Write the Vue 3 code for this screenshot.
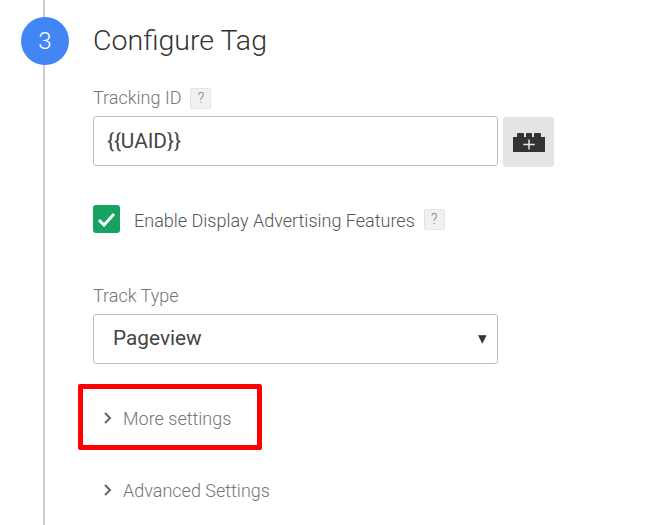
<template>
  <div class="page">
    <div class="rail"></div>
    <div class="badge">3</div>
    <main class="content">
      <h1 class="title">Configure Tag</h1>

      <div class="label-row tracking">
        <span class="label">Tracking ID</span>
        <span class="help">?</span>
      </div>
      <div class="input-row">
        <div class="field">{{ trackingId }}</div>
        <button class="var-btn" aria-label="Insert variable">
          <svg width="32" height="19" viewBox="0 0 32 19">
            <path d="M0 4h4V1q0-1 1-1h5q1 0 1 1v3h2V1q0-1 1-1h4q1 0 1 1v3h2V1q0-1 1-1h5q1 0 1 1v3h4v15H0z" fill="#333" />
            <path d="M15.25 6.5h1.5v4.25h5v1.5h-5v4.25h-1.5v-4.25h-5v-1.5h5z" fill="#e4e4e4" />
          </svg>
        </button>
      </div>

      <label class="check-row">
        <span class="check">
          <svg width="19" height="15" viewBox="0 0 19 15">
            <path d="M2 8l5 5L17 2" fill="none" stroke="#fff" stroke-width="3" />
          </svg>
        </span>
        <span class="check-text">Enable Display Advertising Features</span>
        <span class="help">?</span>
      </label>

      <div class="label track">Track Type</div>
      <div class="field select">
        <span>Pageview</span>
        <span class="caret">▾</span>
      </div>

      <div class="disclosure more">
        <svg class="chev" width="9" height="14" viewBox="0 0 9 14">
          <path d="M2 2l5 5-5 5" fill="none" stroke="#666" stroke-width="2" />
        </svg>
        <span>More settings</span>
      </div>
      <div class="disclosure advanced">
        <svg class="chev" width="9" height="14" viewBox="0 0 9 14">
          <path d="M2 2l5 5-5 5" fill="none" stroke="#666" stroke-width="2" />
        </svg>
        <span>Advanced Settings</span>
      </div>
    </main>
    <div class="highlight"></div>
  </div>
</template>

<script setup>
const trackingId = '{{UAID}}'
</script>

<style scoped>
.page {
  position: relative;
  width: 672px;
  height: 525px;
  overflow: hidden;
  background: #fff;
  font-family: Roboto, "Liberation Sans", sans-serif;
  color: #757575;
}
.rail {
  position: absolute;
  left: 43px;
  top: 0;
  bottom: 0;
  width: 2px;
  background: #ccc;
}
.badge {
  position: absolute;
  left: 21px;
  top: 17px;
  width: 48px;
  height: 48px;
  border-radius: 50%;
  background: #4285f4;
  color: #fff;
  font-size: 24px;
  font-weight: 300;
  line-height: 48px;
  text-align: center;
}
.content {
  display: flex;
  flex-direction: column;
  align-items: flex-start;
  padding: 22px 0 0 93px;
}
.title {
  margin: 0;
  font-size: 28.5px;
  font-weight: 300;
  line-height: 38px;
  color: #333;
}
.label-row {
  display: flex;
  align-items: center;
  gap: 9px;
}
.tracking {
  margin-top: 27px;
  height: 22px;
}
.label {
  font-size: 18px;
  font-weight: 300;
  line-height: 22px;
  color: #757575;
}
.help {
  width: 21px;
  height: 21px;
  box-sizing: border-box;
  border: 1px solid #e4e4e4;
  border-radius: 2px;
  background: #f1f1f1;
  color: #777;
  font-size: 14px;
  font-weight: 300;
  line-height: 19px;
  text-align: center;
}
.input-row {
  display: flex;
  align-items: flex-start;
  gap: 5px;
  margin-top: 7px;
}
.field {
  width: 405px;
  height: 50px;
  box-sizing: border-box;
  border: 1px solid #bdbdbd;
  border-radius: 3px;
  padding: 0 13px;
  background: #fff;
  color: #444;
  font-size: 20.8px;
  line-height: 48px;
}
.var-btn {
  display: flex;
  align-items: center;
  justify-content: center;
  width: 51px;
  height: 50px;
  margin-top: 1px;
  padding: 0;
  border: 0;
  border-radius: 3px;
  background: #e4e4e4;
}
.check-row {
  display: flex;
  align-items: center;
  margin-top: 38px;
  height: 28px;
}
.check {
  display: flex;
  align-items: center;
  justify-content: center;
  width: 27px;
  height: 28px;
  border-radius: 3px;
  background: #16a261;
}
.check-text {
  margin: 2px 9px 0 14px;
  font-size: 18px;
  font-weight: 300;
  color: #555;
}
.track {
  margin-top: 52px;
}
.select {
  display: flex;
  justify-content: space-between;
  margin-top: 7px;
  padding: 0 10px 0 19px;
  line-height: 47px;
}
.caret {
  color: #333;
  font-size: 17px;
}
.disclosure {
  display: flex;
  align-items: center;
  gap: 11px;
  height: 24px;
  margin-left: 10px;
  font-size: 18px;
  font-weight: 300;
  color: #757575;
}
.more {
  margin-top: 42px;
}
.advanced {
  margin-top: 48px;
}
.highlight {
  position: absolute;
  left: 78px;
  top: 384px;
  width: 184px;
  height: 66px;
  box-sizing: border-box;
  border: 5px solid #f00;
  border-radius: 2px;
}
</style>
